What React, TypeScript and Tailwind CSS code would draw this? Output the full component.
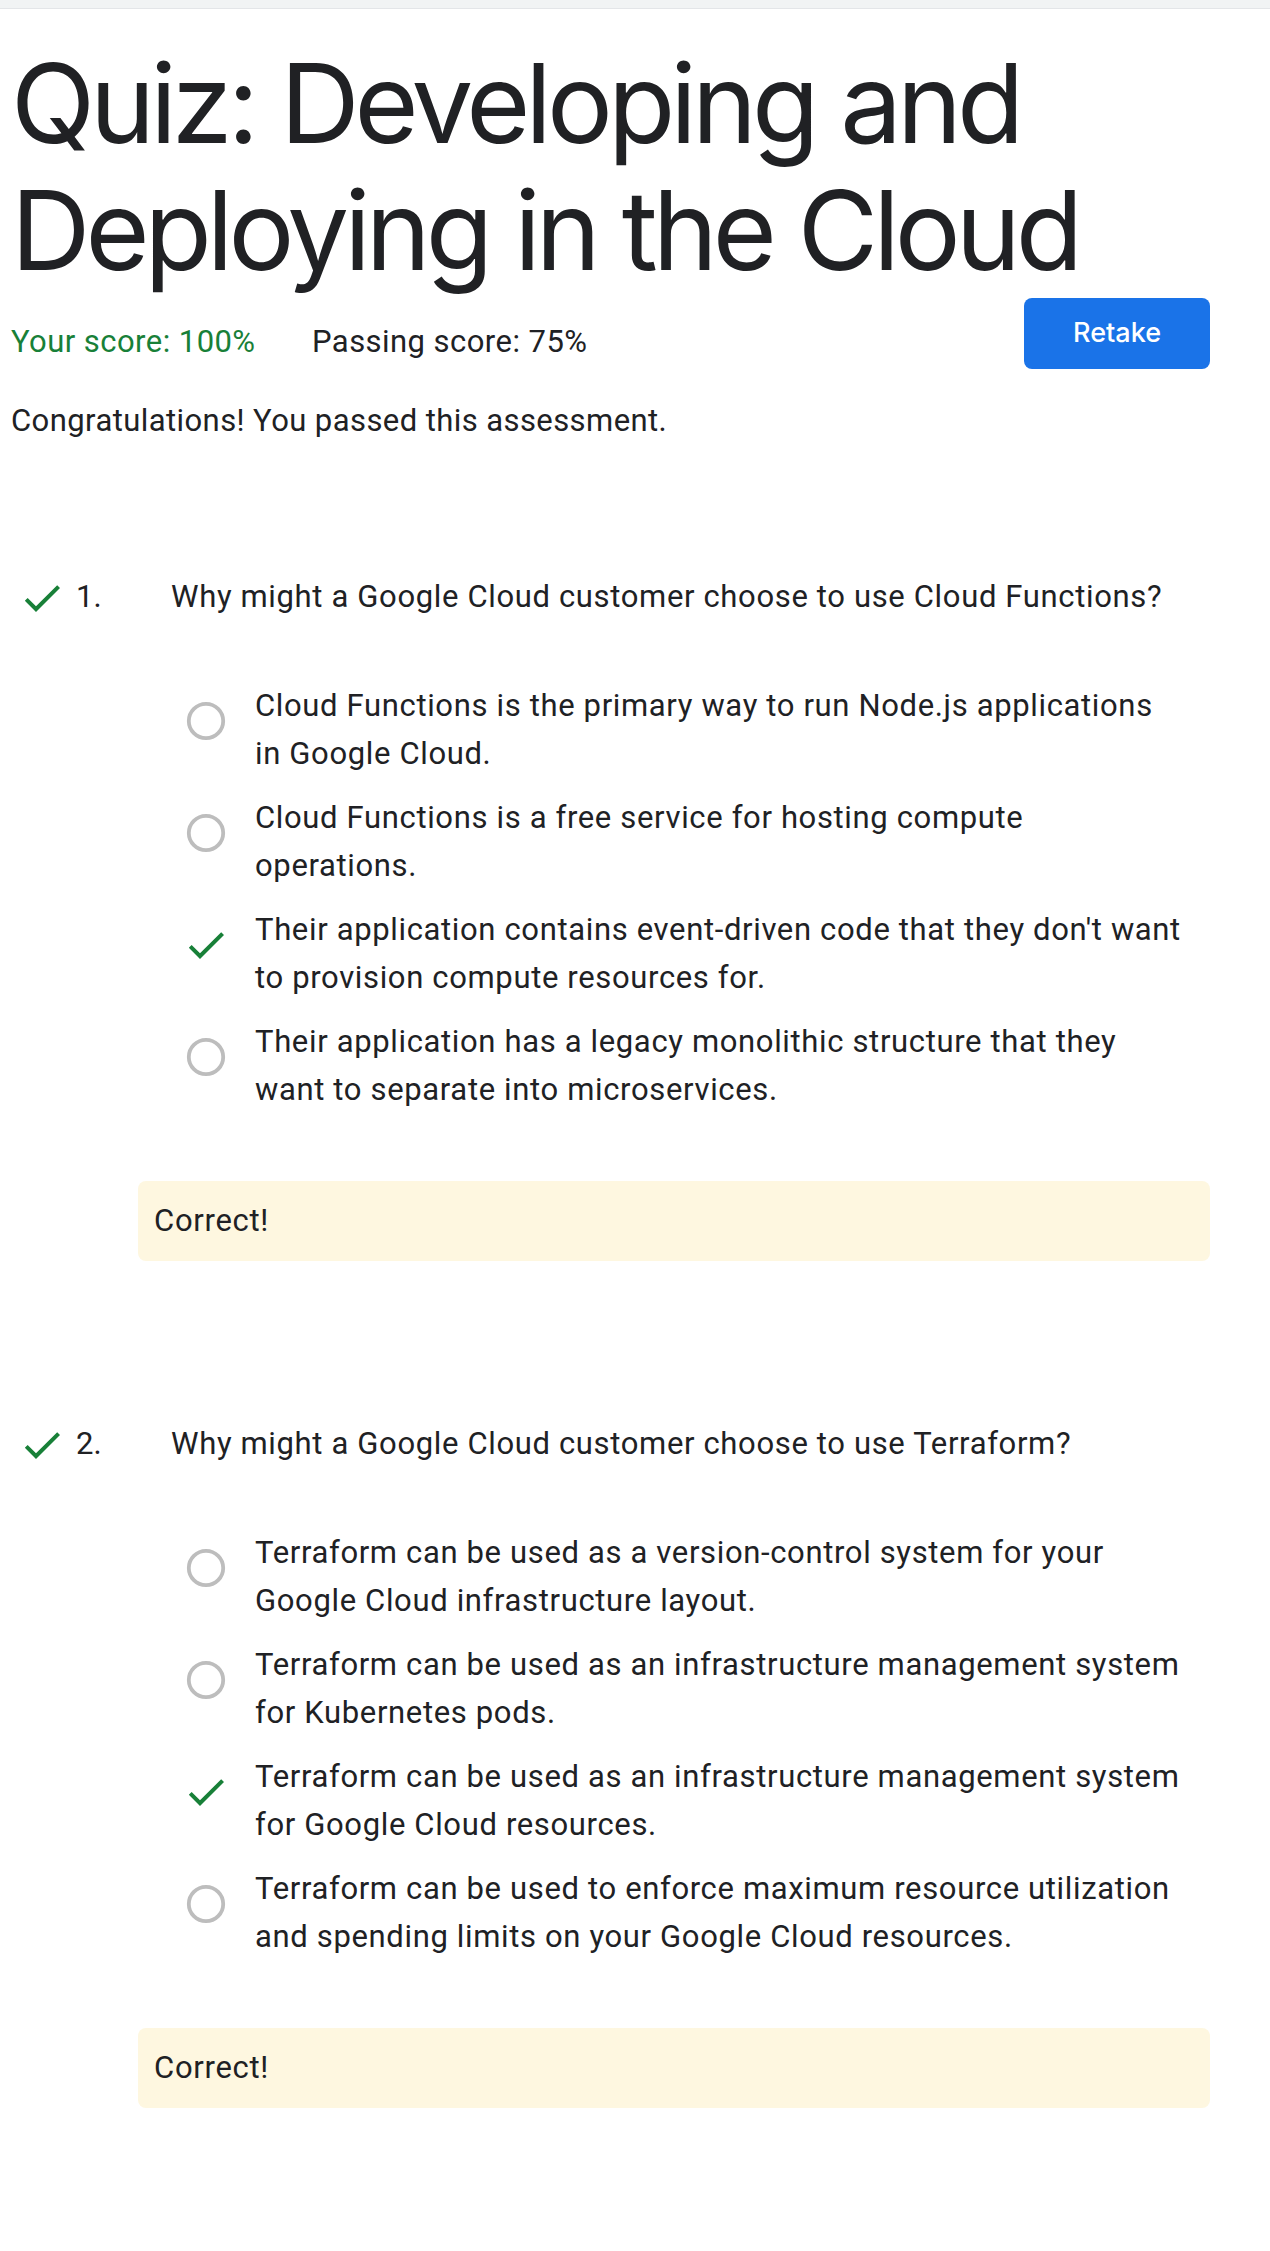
import React from "react";

const GREEN = "#188038";

function Check() {
  return (
    <svg width="48" height="48" viewBox="0 0 24 24" className="block">
      <path d="M9 16.17L4.83 12l-1.42 1.41L9 19 21 7l-1.41-1.41z" fill={GREEN} />
    </svg>
  );
}

function Radio() {
  return (
    <svg width="48" height="48" viewBox="0 0 24 24" className="block">
      <circle cx="12" cy="12" r="8.6" fill="none" stroke="#bdbdbd" strokeWidth="1.9" />
    </svg>
  );
}

type Q = {
  n: string;
  text: string;
  options: { lines: string[]; correct: boolean }[];
};

const questions: Q[] = [
  {
    n: "1.",
    text: "Why might a Google Cloud customer choose to use Cloud Functions?",
    options: [
      { lines: ["Cloud Functions is the primary way to run Node.js applications", "in Google Cloud."], correct: false },
      { lines: ["Cloud Functions is a free service for hosting compute", "operations."], correct: false },
      { lines: ["Their application contains event-driven code that they don't want", "to provision compute resources for."], correct: true },
      { lines: ["Their application has a legacy monolithic structure that they", "want to separate into microservices."], correct: false },
    ],
  },
  {
    n: "2.",
    text: "Why might a Google Cloud customer choose to use Terraform?",
    options: [
      { lines: ["Terraform can be used as a version-control system for your", "Google Cloud infrastructure layout."], correct: false },
      { lines: ["Terraform can be used as an infrastructure management system", "for Kubernetes pods."], correct: false },
      { lines: ["Terraform can be used as an infrastructure management system", "for Google Cloud resources."], correct: true },
      { lines: ["Terraform can be used to enforce maximum resource utilization", "and spending limits on your Google Cloud resources."], correct: false },
    ],
  },
];

function Question({ q, first }: { q: Q; first: boolean }) {
  return (
    <section className={first ? "mt-[129px]" : "mt-[160px]"}>
      <div className="flex items-start h-[46.7px] whitespace-nowrap">
        <div className="ml-[7px] w-[48px] h-[46.7px]">
          <Check />
        </div>
        <span className="ml-[10px] w-[95px]">{q.n}</span>
        <span className="tracking-[0.65px]">{q.text}</span>
      </div>
      <div className="mt-[61.5px] flex flex-col gap-[16px]">
        {q.options.map((o, i) => (
          <div key={i} className="flex items-start ml-[171px]">
            <div className="mt-[15px] w-[48px] h-[48px] shrink-0">{o.correct ? <Check /> : <Radio />}</div>
            <div className="ml-[25px] whitespace-nowrap leading-[48px] tracking-[0.65px]">
              {o.lines.map((l, j) => (
                <div key={j}>{l}</div>
              ))}
            </div>
          </div>
        ))}
      </div>
      <div className="mt-[66.8px] ml-[127px] h-[80px] rounded-[8px] bg-[#fef7e0] pl-[16px] pt-[17px] tracking-[0.7px]">
        Correct!
      </div>
    </section>
  );
}

export default function App() {
  return (
    <div
      className="min-h-[2251px] bg-white text-[#202124] text-[31px] leading-[46.7px]"
      style={{ fontFamily: "Roboto, 'Liberation Sans', sans-serif" }}
    >
      <div className="h-[9px] bg-[#f1f3f4] border-b border-[#e3e5e8]" />
      <div className="pl-[11px] pr-[60px]">
        <h1
          className="mt-[30.5px] text-[110px] leading-[127px] font-normal tracking-[-5px]"
          style={{ fontFamily: "Inter, 'Open Sans', sans-serif" }}
        >
          Quiz: Developing and
          <br />
          Deploying in the Cloud
        </h1>
        <div className="mt-[4.5px] flex items-start justify-between">
          <div className="pt-[21px] whitespace-nowrap tracking-[0.45px]">
            <span className="inline-block w-[301px]" style={{ color: GREEN }}>
              Your score: 100%
            </span>
            <span>Passing score: 75%</span>
          </div>
          <button
            className="w-[186px] h-[71px] rounded-[8px] bg-[#1a73e8] text-white text-[27px] font-medium"
            style={{ fontFamily: "Inter, 'Open Sans', sans-serif" }}
          >
            Retake
          </button>
        </div>
        <p className="mt-[29px] tracking-[0.42px]">Congratulations! You passed this assessment.</p>
        {questions.map((q, i) => (
          <Question key={i} q={q} first={i === 0} />
        ))}
      </div>
    </div>
  );
}
